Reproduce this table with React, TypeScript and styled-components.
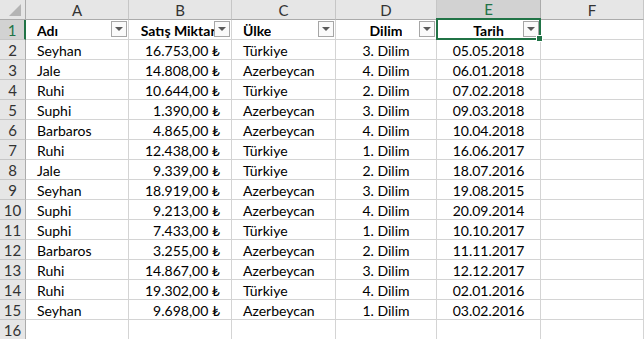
import React from "react";
import styled, { createGlobalStyle } from "styled-components";

const GlobalStyle = createGlobalStyle`
	html, body {
		margin: 0;
		padding: 0;
		background: #fff;
		overflow: hidden;
	}
`;

const Green = "#217346";
const Grid = "#d4d4d4";

const columns = ["A", "B", "C", "D", "E", "F"];
const selectedCol = 4;

type Align = "left" | "right" | "center";

const align: Align[] = ["left", "right", "left", "center", "center", "left"];
const headAlign: Align[] = ["left", "center", "left", "center", "center", "left"];
const headers = ["Adı", "Satış Miktarı", "Ülke", "Dilim", "Tarih", ""];

const rows: string[][] = [
	["Seyhan", "16.753,00 ₺", "Türkiye", "3. Dilim", "05.05.2018"],
	["Jale", "14.808,00 ₺", "Azerbeycan", "4. Dilim", "06.01.2018"],
	["Ruhi", "10.644,00 ₺", "Türkiye", "2. Dilim", "07.02.2018"],
	["Suphi", "1.390,00 ₺", "Azerbeycan", "3. Dilim", "09.03.2018"],
	["Barbaros", "4.865,00 ₺", "Azerbeycan", "4. Dilim", "10.04.2018"],
	["Ruhi", "12.438,00 ₺", "Türkiye", "1. Dilim", "16.06.2017"],
	["Jale", "9.339,00 ₺", "Türkiye", "2. Dilim", "18.07.2016"],
	["Seyhan", "18.919,00 ₺", "Azerbeycan", "3. Dilim", "19.08.2015"],
	["Suphi", "9.213,00 ₺", "Azerbeycan", "4. Dilim", "20.09.2014"],
	["Suphi", "7.433,00 ₺", "Türkiye", "1. Dilim", "10.10.2017"],
	["Barbaros", "3.255,00 ₺", "Azerbeycan", "2. Dilim", "11.11.2017"],
	["Ruhi", "14.867,00 ₺", "Azerbeycan", "3. Dilim", "12.12.2017"],
	["Ruhi", "19.302,00 ₺", "Türkiye", "4. Dilim", "02.01.2016"],
	["Seyhan", "9.698,00 ₺", "Azerbeycan", "1. Dilim", "03.02.2016"],
	["", "", "", "", ""]
];

const Sheet = styled.div`
	display: grid;
	grid-template-columns: 26px 103px 103px 104px 101px 104px 103px;
	grid-auto-rows: 20px;
	width: 644px;
	height: 339px;
	overflow: hidden;
	font-family: Lato, "DejaVu Sans", sans-serif;
	color: #000;
`;

const Corner = styled.div`
	position: relative;
	background: #e6e6e6;
	border-right: 1px solid #ababab;
	border-bottom: 1px solid #ababab;

	&::after {
		content: "";
		position: absolute;
		right: 4px;
		bottom: 3px;
		width: 0;
		height: 0;
		border-left: 12px solid transparent;
		border-bottom: 12px solid #b4b4b4;
	}
`;

const ColHeader = styled.div<{ selected?: boolean }>`
	box-sizing: border-box;
	display: flex;
	align-items: center;
	justify-content: center;
	background: ${props => (props.selected ? "#d2d2d2" : "#e6e6e6")};
	color: ${props => (props.selected ? Green : "#333")};
	border-right: 1px solid ${props => (props.selected ? "#ababab" : "#c6c6c6")};
	border-bottom: ${props => (props.selected ? `2px solid ${Green}` : "1px solid #ababab")};
	font-size: 15px;
	line-height: 19px;
	padding-top: 1px;
`;

const RowHeader = styled.div<{ selected?: boolean }>`
	box-sizing: border-box;
	display: flex;
	align-items: center;
	justify-content: center;
	background: ${props => (props.selected ? "#d2d2d2" : "#e6e6e6")};
	color: ${props => (props.selected ? Green : "#333")};
	border-right: ${props => (props.selected ? `2px solid ${Green}` : "1px solid #ababab")};
	border-bottom: 1px solid #c6c6c6;
	font-size: 15px;
	line-height: 19px;
	padding-top: 1px;
`;

const Cell = styled.div<{ align: Align; bold?: boolean }>`
	position: relative;
	box-sizing: border-box;
	display: flex;
	align-items: center;
	justify-content: ${props =>
		props.align === "left" ? "flex-start" : props.align === "right" ? "flex-end" : "center"};
	padding: 2px ${props => (props.align === "right" ? "11px" : "2px")} 0
		${props => (props.align === "left" ? "11px" : "2px")};
	border-right: 1px solid ${Grid};
	border-bottom: 1px solid ${Grid};
	font-size: 14px;
	font-weight: ${props => (props.bold ? 700 : 400)};
	white-space: nowrap;
	overflow: hidden;
	line-height: 18px;
`;

const HeadCell = styled(Cell)`
	overflow: visible;
`;

const HeadText = styled.span`
	overflow: hidden;
	white-space: nowrap;
`;

const FilterButton = styled.div`
	position: absolute;
	top: 1px;
	right: 1px;
	box-sizing: border-box;
	width: 16px;
	height: 16px;
	background: #fafafa;
	border: 1px solid #a6a6a6;
	display: flex;
	align-items: center;
	justify-content: center;
	z-index: 2;

	&::after {
		content: "";
		width: 0;
		height: 0;
		border-left: 4px solid transparent;
		border-right: 4px solid transparent;
		border-top: 4px solid #595959;
	}
`;

const Selection = styled.div`
	position: absolute;
	left: -1px;
	top: -2px;
	width: 105px;
	height: 22px;
	box-sizing: border-box;
	border: 2px solid ${Green};
	pointer-events: none;
	z-index: 3;
`;

const FillHandle = styled.div`
	position: absolute;
	right: -4px;
	bottom: -4px;
	width: 7px;
	height: 7px;
	box-sizing: border-box;
	background: ${Green};
	border: 1px solid #fff;
	z-index: 4;
`;

export default function App() {
	return (
		<>
			<GlobalStyle />
			<Sheet>
				<Corner />
				{columns.map((c, i) => (
					<ColHeader key={c} selected={i === selectedCol}>
						{c}
					</ColHeader>
				))}

				<RowHeader selected>1</RowHeader>
				{headers.map((h, i) => (
					<HeadCell key={i} align={headAlign[i]} bold>
						<HeadText>{h}</HeadText>
						{h && <FilterButton />}
						{i === selectedCol && (
							<Selection>
								<FillHandle />
							</Selection>
						)}
					</HeadCell>
				))}

				{rows.map((row, r) => (
					<React.Fragment key={r}>
						<RowHeader>{r + 2}</RowHeader>
						{row.map((v, i) => (
							<Cell key={i} align={align[i]}>
								{v}
							</Cell>
						))}
						<Cell align="left" />
					</React.Fragment>
				))}
			</Sheet>
		</>
	);
}
